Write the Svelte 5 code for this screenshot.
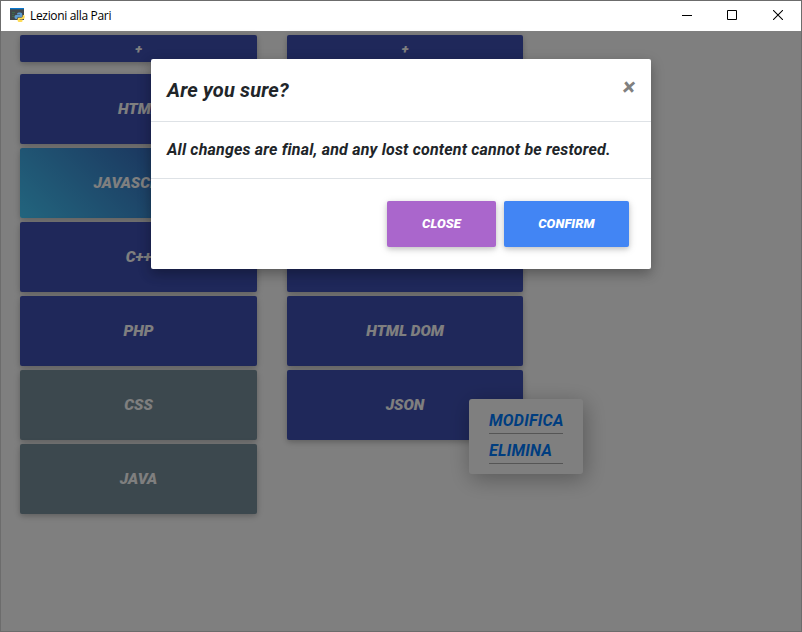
<script>
  const columns = [
    [
      { label: 'HTML', tone: 'indigo' },
      { label: 'JAVASCRIPT', tone: 'gradient' },
      { label: 'C++', tone: 'indigo' },
      { label: 'PHP', tone: 'indigo' },
      { label: 'CSS', tone: 'slate' },
      { label: 'JAVA', tone: 'slate' }
    ],
    [
      { label: 'PYTHON', tone: 'indigo' },
      { label: 'JQUERY', tone: 'indigo' },
      { label: 'SQL', tone: 'indigo' },
      { label: 'HTML DOM', tone: 'indigo' },
      { label: 'JSON', tone: 'indigo' }
    ]
  ];
</script>

<div class="window">
  <header class="titlebar">
    <svg class="logo" width="16" height="16" viewBox="0 0 16 16">
      <path fill="#41484c" d="M0 0h14v12H0z" />
      <path fill="#0878cf" d="M0 0h14v1.300H0z" />
      <path stroke="#3e6b4a" d="M2 4.500h3M2 6.500h2M2 8.500h3" />
      <path fill="#5d9bd0" d="M8.700 4.500h1.800q1.700 0 1.700 1.500v2q0 1.300-1.500 1.300H8.300Q7 9.300 7 10.600V11H6Q4.500 11 4.500 9.200 4.500 7 6 7h4v-.5H7V6Q7 4.500 8.700 4.500z" />
      <path fill="#ffdc55" d="M12.800 7H13.500q1.300 0 1.300 2t-1.500 2H9.600v.6h3v1q0 1.500-1.500 1.500H9.200Q7.600 14.100 7.600 12.600V11q0-1.300 1.500-1.300H11q1.800 0 1.800-1.700z" />
    </svg>
    <span class="title">Lezioni alla Pari</span>
    <div class="controls">
      <svg width="10" height="10" viewBox="0 0 10 10" shape-rendering="crispEdges"><path d="M0 5.500h10" stroke="#000" /></svg>
      <svg width="10" height="10" viewBox="0 0 10 10"><path d="M.5.5h9v9h-9z" fill="none" stroke="#000" /></svg>
      <svg width="10" height="10" viewBox="0 0 10 10"><path d="M0 0l10 10M10 0L0 10" stroke="#000" stroke-width="1.050" /></svg>
    </div>
  </header>

  <main class="page">
    <div class="columns">
      {#each columns as column}
        <section class="column">
          <button class="btn add">+</button>
          {#each column as item}
            <button class="btn lesson {item.tone}">{item.label}</button>
          {/each}
        </section>
      {/each}
    </div>
    <nav class="menu">
      <a href="#edit">MODIFICA</a>
      <a href="#delete">ELIMINA</a>
    </nav>
    <div class="backdrop"></div>
    <div class="modal" role="dialog" aria-modal="true" aria-labelledby="modal-title">
      <div class="modal-header">
        <h4 id="modal-title">Are you sure?</h4>
        <button class="dismiss" aria-label="Close">×</button>
      </div>
      <div class="modal-body">All changes are final, and any lost content cannot be restored.</div>
      <div class="modal-footer">
        <button class="btn action close">CLOSE</button>
        <button class="btn action confirm">CONFIRM</button>
      </div>
    </div>
  </main>
</div>

<style>
  .window {
    box-sizing: border-box;
    width: 802px;
    height: 632px;
    border: 1px solid #6c6c6c;
    display: flex;
    flex-direction: column;
    overflow: hidden;
    background: #fff;
    font-family: Roboto, sans-serif;
    font-weight: 700;
    font-style: italic;
  }
  .titlebar {
    box-sizing: border-box;
    height: 30px;
    flex: none;
    display: flex;
    align-items: center;
    padding: 0 0 2px 9px;
    background: #fff;
    color: #000;
    font: 400 12px 'Open Sans', sans-serif;
  }
  .logo { margin-top: 2px; }
  .title { margin-left: 4px; letter-spacing: -0.33px; }
  .controls { margin-left: auto; display: flex; gap: 35px; padding-right: 18px; }
  .controls svg { display: block; }
  .controls svg:last-child { margin-left: 1px; }
  .page { position: relative; flex: 1; background: #fff; }
  .columns { display: flex; gap: 30px; padding: 4px 0 0 19px; }
  .column { display: flex; flex-direction: column; gap: 4px; width: 237px; }
  .column + .column { width: 236px; }
  .btn {
    display: block;
    margin: 0;
    padding: 0 0 2px;
    border: 0;
    border-radius: 2px;
    color: #fff;
    font: italic 900 15.4px Roboto, sans-serif;
    box-shadow: 0 2px 5px rgba(0, 0, 0, 0.16), 0 2px 10px rgba(0, 0, 0, 0.12);
  }
  .add { height: 27px; margin-bottom: 8px; background: #3f51b5; font-size: 13px; padding-bottom: 1px; }
  .lesson { height: 70px; padding-bottom: 0; }
  .indigo { background: #3f51b5; }
  .slate { background: #78909c; }
  .gradient { background: linear-gradient(45deg, #45cafc, #303f9f); }
  .menu {
    position: absolute;
    left: 468px;
    top: 368px;
    box-sizing: border-box;
    width: 114px;
    height: 75px;
    padding: 6px 20px 0;
    border-radius: 3px;
    background: #fff;
    box-shadow: 2px 5px 22px rgba(0, 0, 0, 0.3);
  }
  .menu a {
    display: block;
    box-sizing: border-box;
    width: 74px;
    height: 29px;
    margin-bottom: 1px;
    border-bottom: 1px solid #aaa;
    color: #007bff;
    font-size: 16px;
    line-height: 31px;
    letter-spacing: 0.25px;
    text-decoration: none;
    white-space: nowrap;
  }
  .backdrop { position: absolute; inset: 0; background: rgba(0, 0, 0, 0.5); }
  .modal {
    position: absolute;
    left: 150px;
    top: 28px;
    width: 500px;
    height: 210px;
    border-radius: 2px;
    background: #fff;
    color: #212529;
    box-shadow: 0 5px 11px rgba(0, 0, 0, 0.18), 0 4px 15px rgba(0, 0, 0, 0.15);
  }
  .modal-header {
    box-sizing: border-box;
    height: 63px;
    display: flex;
    justify-content: space-between;
    align-items: flex-start;
    padding: 16px 16px 0;
    border-bottom: 1px solid #dee2e6;
  }
  h4 { margin: 0; font-size: 20px; line-height: 30px; font-weight: 700; letter-spacing: 0.17px; }
  .dismiss {
    margin: 0;
    padding: 0;
    border: 0;
    background: none;
    color: #808080;
    font: italic 700 24px/24px Roboto, sans-serif;
  }
  .modal-body {
    box-sizing: border-box;
    height: 56px;
    padding: 16px;
    font-size: 16px;
    line-height: 24px;
    letter-spacing: 0.195px;
    white-space: nowrap;
  }
  .modal-footer {
    display: flex;
    justify-content: flex-end;
    gap: 8px;
    padding: 22px 22px 0;
    border-top: 1px solid #dee2e6;
  }
  .action { height: 46px; font-size: 13px; letter-spacing: 0.1px; }
  .close { width: 109px; background: #aa66cc; }
  .confirm { width: 125px; background: #4285f4; }
</style>
